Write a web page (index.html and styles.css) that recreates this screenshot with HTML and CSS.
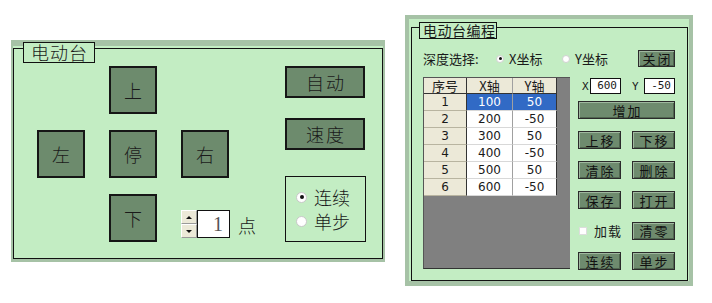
FILE: index.html
```html
<!DOCTYPE html>
<html lang="zh">
<head>
<meta charset="utf-8">
<title>电动台</title>
<link rel="stylesheet" href="styles.css">
</head>
<body>
<div class="page">
  <section class="panel panel-left">
    <div class="frame">
      <div class="legend legend-left">电动台</div>
      <div class="left-body">
        <div class="cross">
          <span></span>
          <div class="pad">上</div>
          <span></span>
          <div class="pad">左</div>
          <div class="pad">停</div>
          <div class="pad">右</div>
          <span></span>
          <div class="pad">下</div>
          <div class="spin">
            <div class="arrows">
              <div class="arrow"><span class="tri up"></span></div>
              <div class="arrow"><span class="tri down"></span></div>
            </div>
            <div class="spin-input">1</div>
            <span class="unit">点</span>
          </div>
        </div>
        <div class="side">
          <div class="wide">自动</div>
          <div class="wide wide-2">速度</div>
          <div class="mode">
            <div class="radio"><span class="dot on"></span>连续</div>
            <div class="radio"><span class="dot"></span>单步</div>
          </div>
        </div>
      </div>
    </div>
  </section>

  <section class="panel panel-right">
    <div class="frame">
      <div class="legend legend-right">电动台编程</div>
      <div class="right-body">
        <div class="top-row">
          <span class="depth">深度选择:</span>
          <span class="opt opt-x"><span class="sdot on"></span>X坐标</span>
          <span class="opt"><span class="sdot"></span>Y坐标</span>
          <span class="btn btn-close">关闭</span>
        </div>
        <div class="main-row">
          <div class="grid">
            <div class="row head">
              <div class="c c1">序号</div><div class="c c2">X轴</div><div class="c c3">Y轴</div>
            </div>
            <div class="row sel">
              <div class="c c1">1</div><div class="c c2">100</div><div class="c c3">50</div>
            </div>
            <div class="row">
              <div class="c c1">2</div><div class="c c2">200</div><div class="c c3">-50</div>
            </div>
            <div class="row">
              <div class="c c1">3</div><div class="c c2">300</div><div class="c c3">50</div>
            </div>
            <div class="row">
              <div class="c c1">4</div><div class="c c2">400</div><div class="c c3">-50</div>
            </div>
            <div class="row">
              <div class="c c1">5</div><div class="c c2">500</div><div class="c c3">50</div>
            </div>
            <div class="row">
              <div class="c c1">6</div><div class="c c2">600</div><div class="c c3">-50</div>
            </div>
          </div>
          <div class="controls">
            <div class="xy">
              <span class="axis">X</span><span class="num">600</span>
              <span class="axis axis-y">Y</span><span class="num">-50</span>
            </div>
            <div class="btn btn-full">增加</div>
            <div class="pair"><span class="btn">上移</span><span class="btn">下移</span></div>
            <div class="pair"><span class="btn">清除</span><span class="btn">删除</span></div>
            <div class="pair"><span class="btn">保存</span><span class="btn">打开</span></div>
            <div class="pair"><span class="check"><span class="box"></span>加载</span><span class="btn">清零</span></div>
            <div class="pair"><span class="btn">连续</span><span class="btn">单步</span></div>
          </div>
        </div>
      </div>
    </div>
  </section>
</div>
</body>
</html>
```

FILE: styles.css
```css
* { box-sizing: border-box; }

body {
  margin: 0;
  background: #ffffff;
  font-family: "Noto Sans CJK SC", "Noto Sans", sans-serif;
  color: #1a1a1a;
}

.page {
  display: flex;
  align-items: flex-start;
}

.panel {
  background: #c3edc3;
  border-style: solid;
  border-color: #a6c2a6;
  display: flex;
}

.frame {
  flex: 1;
  border: 1px solid #111;
  position: relative;
}

.legend {
  position: absolute;
  border: 1px solid #111;
  background: #c3edc3;
  white-space: nowrap;
}

/* ---------- left panel ---------- */
.panel-left {
  margin: 40px 0 0 11px;
  width: 374px;
  height: 222px;
  border-width: 6px 2px 3px 2px;
  padding-top: 2px;
  font-weight: 300;
}

.legend-left {
  left: 9px;
  top: -7px;
  width: 72px;
  height: 21px;
  font-size: 18px;
  line-height: 19px;
  padding-left: 7px;
  letter-spacing: 1px;
}

.left-body {
  display: flex;
  padding: 17px 0 0 23px;
}

.cross {
  display: grid;
  grid-template-columns: repeat(3, 48px);
  grid-template-rows: repeat(3, 48px);
  gap: 16px 24px;
}

.pad,
.wide {
  border: 2px solid #161616;
  background: #6d8b6d;
  display: flex;
  align-items: center;
  justify-content: center;
  font-size: 18px;
  color: #1a1a1a;
}

.spin {
  align-self: end;
  margin-bottom: 4px;
  display: flex;
  align-items: center;
  width: max-content;
}

.arrows {
  display: flex;
  flex-direction: column;
  width: 16px;
}

.arrow {
  height: 14px;
  background: #ece9d8;
  border: 1px solid #fff;
  border-right-color: #9a9a9a;
  border-bottom-color: #9a9a9a;
  display: flex;
  align-items: center;
  justify-content: center;
}

.tri {
  width: 0;
  height: 0;
  border-left: 3px solid transparent;
  border-right: 3px solid transparent;
}

.tri.up { border-bottom: 3px solid #111; }
.tri.down { border-top: 3px solid #111; }

.spin-input {
  width: 33px;
  height: 28px;
  background: #fff;
  border: 1px solid #111;
  font-family: "Liberation Serif", serif;
  font-size: 20px;
  line-height: 26px;
  text-align: right;
  padding-right: 6px;
  color: #555;
}

.unit {
  margin-left: 8px;
  font-size: 18px;
  margin-top: 2px;
}

.side {
  margin-left: 56px;
  display: flex;
  flex-direction: column;
}

.wide {
  width: 80px;
  height: 32px;
  margin-bottom: 20px;
  letter-spacing: 2px;
  padding-left: 2px;
}

.wide-2 { margin-bottom: 26px; }

.mode {
  width: 81px;
  height: 66px;
  border: 1px solid #111;
  display: flex;
  flex-direction: column;
  justify-content: center;
  gap: 2px;
  padding-left: 10px;
}

.radio {
  display: flex;
  align-items: center;
  height: 22px;
  font-size: 18px;
  letter-spacing: 0;
}

.dot {
  width: 11px;
  height: 11px;
  border-radius: 50%;
  background: #fff;
  border: 1px solid #c8c8c8;
  margin-right: 7px;
  display: flex;
  align-items: center;
  justify-content: center;
}

.dot.on::after {
  content: "";
  width: 4px;
  height: 4px;
  border-radius: 50%;
  background: #111;
}

/* ---------- right panel ---------- */
.panel-right {
  margin: 15px 0 0 20px;
  width: 288px;
  height: 271px;
  border-width: 4px 4px 5px 4px;
  padding: 8px 1px 0 2px;
}

.legend-right {
  left: 7px;
  top: -6px;
  width: 78px;
  height: 17px;
  font-size: 14px;
  line-height: 15px;
  padding-left: 3px;
  letter-spacing: 0.5px;
}

.right-body {
  padding: 22px 12px 0 11px;
  display: flex;
  flex-direction: column;
}

.top-row {
  display: flex;
  align-items: center;
  height: 17px;
  font-size: 13px;
}

.depth { width: 73px; white-space: nowrap; }

.opt {
  display: flex;
  align-items: center;
  white-space: nowrap;
}

.opt-x { width: 66px; }

.sdot {
  width: 8px;
  height: 8px;
  border-radius: 50%;
  background: #fff;
  border: 1px solid #d0d0d0;
  margin-right: 5px;
  display: flex;
  align-items: center;
  justify-content: center;
}

.sdot.on::after {
  content: "";
  width: 3px;
  height: 3px;
  border-radius: 50%;
  background: #111;
}

.btn {
  background: #6e8b6e;
  border: 1px solid #2b2b2b;
  box-shadow: inset 1px 1px 0 #9fb89f, inset -1px -1px 0 #4f654f;
  display: flex;
  align-items: center;
  justify-content: center;
  font-size: 13px;
  letter-spacing: 2px;
  padding-left: 2px;
  height: 18px;
  width: 43px;
  color: #111;
}

.btn-close {
  margin-left: auto;
  width: 37px;
  height: 17px;
}

.main-row {
  display: flex;
  margin-top: 10px;
}

.grid {
  width: 147px;
  height: 192px;
  background: #808080;
  border-top: 1px solid #555;
  border-left: 1px solid #555;
  border-bottom: 1px solid #333;
}

.row {
  display: flex;
  height: 17px;
  font-size: 13px;
}

.row.head { height: 16px; }

.c {
  display: flex;
  align-items: center;
  justify-content: center;
  background: #fff;
  border-right: 1px solid #a0a0a0;
  border-bottom: 1px solid #d8d8d8;
  font-family: "DejaVu Sans", "Noto Sans CJK SC", sans-serif;
  font-size: 12px;
}

.c1 {
  width: 43px;
  background: #ece9d8;
  border-right: 1px solid #333;
  border-bottom: 1px solid #b8b4a0;
}

.c2 { width: 46px; }
.c3 { width: 44px; border-right: 1px solid #333; }

.head .c {
  background: #ece9d8;
  border-bottom: 1px solid #333;
  font-family: "Noto Sans CJK SC", sans-serif;
  font-size: 13px;
}

.sel .c2,
.sel .c3 {
  background: #316ac5;
  color: #fff;
}

.controls {
  margin-left: 8px;
  width: 97px;
  display: flex;
  flex-direction: column;
}

.xy {
  display: flex;
  align-items: center;
  height: 16px;
  margin-top: 1px;
  font-family: "DejaVu Sans Mono", monospace;
  font-size: 11px;
}

.axis { width: 12px; padding-left: 4px; }
.axis-y { width: 23px; padding-left: 11px; }

.num {
  width: 31px;
  height: 16px;
  background: #fff;
  border: 1px solid #111;
  text-align: right;
  padding-right: 3px;
  line-height: 14px;
  font-size: 11px;
}

.btn-full {
  width: 97px;
  margin-top: 7px;
}

.pair {
  display: flex;
  justify-content: space-between;
  align-items: center;
  margin-top: 12px;
}

.check {
  display: flex;
  align-items: center;
  font-size: 13px;
  letter-spacing: 1px;
}

.box {
  width: 8px;
  height: 8px;
  background: #fff;
  border: 1px solid #ddd;
  margin: 0 7px 0 1px;
}
```
